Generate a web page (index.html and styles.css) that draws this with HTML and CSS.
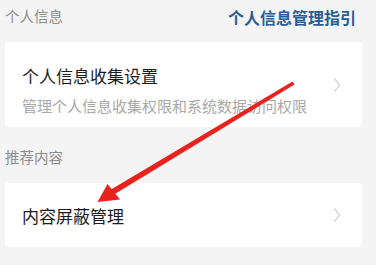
FILE: index.html
```html
<!DOCTYPE html>
<html lang="zh">
<head>
<meta charset="utf-8">
<link rel="stylesheet" href="styles.css">
</head>
<body>
<div class="page">
  <div class="section-head first">
    <span class="section-title">个人信息</span>
    <span class="guide-link">个人信息管理指引</span>
  </div>
  <div class="card card-tall">
    <div class="card-text">
      <div class="item-title">个人信息收集设置</div>
      <div class="item-sub">管理个人信息收集权限和系统数据访问权限</div>
    </div>
    <svg class="chevron" viewBox="0 0 8 16" width="8" height="16"><path d="M1.5 1.5 L6.5 8 L1.5 14.5" fill="none" stroke="#d4d4d4" stroke-width="1.3"/></svg>
  </div>
  <div class="section-head second">
    <span class="section-title">推荐内容</span>
  </div>
  <div class="card card-short">
    <div class="card-text">
      <div class="item-title">内容屏蔽管理</div>
    </div>
    <svg class="chevron" viewBox="0 0 8 16" width="8" height="16"><path d="M1.5 1.5 L6.5 8 L1.5 14.5" fill="none" stroke="#d4d4d4" stroke-width="1.3"/></svg>
  </div>
  <svg class="annotation" viewBox="0 0 376 265" width="376" height="265">
    <polygon points="292.5,81.5 294.5,84.5 114,194.5 111,189.5" fill="#e8231d"/>
    <polygon points="97.5,202 107.5,184 120,199.5" fill="#e8231d"/>
  </svg>
</div>
</body>
</html>
```
FILE: styles.css
```css
html, body {
  margin: 0;
  padding: 0;
  background: #f4f4f4;
}
body {
  font-family: "Noto Sans CJK SC", "Noto Sans", sans-serif;
  width: 376px;
  height: 265px;
  overflow: hidden;
}
.page {
  position: relative;
  width: 376px;
  height: 265px;
}
.section-head {
  display: flex;
  justify-content: space-between;
  align-items: center;
  padding: 0 20px 0 5px;
  box-sizing: border-box;
}
.section-head.first {
  height: 42px;
  padding-bottom: 10px;
}
.section-head.second {
  height: 56px;
  padding-top: 4px;
}
.section-title {
  font-size: 14.5px;
  line-height: 20px;
  color: #8e8e8e;
}
.guide-link {
  font-size: 16px;
  line-height: 20px;
  font-weight: bold;
  color: #2a5d96;
  margin-top: 2px;
}
.card {
  margin-left: 5px;
  width: 357px;
  background: #fff;
  border-radius: 3px;
  display: flex;
  align-items: center;
  justify-content: space-between;
  padding: 0 21px 0 17px;
  box-sizing: border-box;
}
.card-tall {
  height: 85px;
  align-items: flex-start;
  padding-top: 22px;
}
.card-tall .chevron {
  align-self: center;
  margin-top: -21px;
}
.card-short {
  height: 64px;
}
.item-title {
  font-size: 17px;
  line-height: 24px;
  color: #1c1c1c;
}
.card-short .item-title {
  margin-top: 2px;
}
.item-sub {
  font-size: 15px;
  line-height: 20px;
  color: #a8a8a8;
  margin-top: 8px;
}
.chevron {
  display: block;
  flex: none;
}
.annotation {
  position: absolute;
  left: 0;
  top: 0;
  pointer-events: none;
}
```
